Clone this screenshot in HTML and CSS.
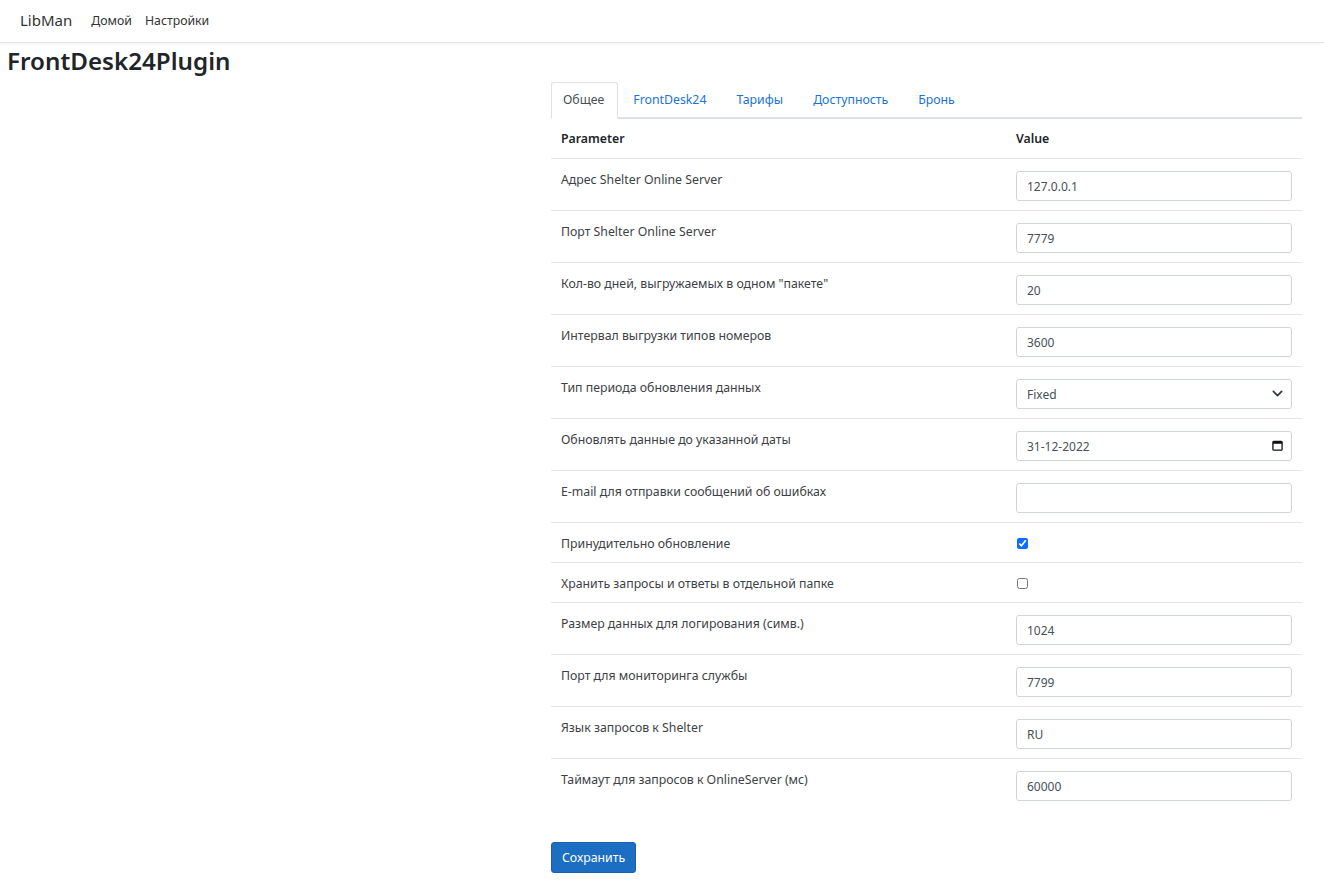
FILE: index.html
```html
<!DOCTYPE html>
<html lang="ru">
<head>
    <meta charset="UTF-8">
    <meta name="viewport" content="width=device-width, initial-scale=1.0">
    <title>FrontDesk24Plugin</title>
    <link rel="stylesheet" href="styles.css">
</head>
<body>
    <header class="navbar">
        <a class="brand" href="#">LibMan</a>
        <a class="nav-link" href="#">Домой</a>
        <a class="nav-link" href="#">Настройки</a>
    </header>

    <main class="page">
        <h3 class="page-title">FrontDesk24Plugin</h3>

        <div class="settings">
            <ul class="tabs">
                <li class="tab active">Общее</li>
                <li class="tab">FrontDesk24</li>
                <li class="tab">Тарифы</li>
                <li class="tab">Доступность</li>
                <li class="tab">Бронь</li>
            </ul>

            <table class="params">
                <thead>
                    <tr>
                        <th class="col-name">Parameter</th>
                        <th>Value</th>
                    </tr>
                </thead>
                <tbody>
                    <tr>
                        <td>Адрес Shelter Online Server</td>
                        <td><input class="form-control" type="text" value="127.0.0.1"></td>
                    </tr>
                    <tr>
                        <td>Порт Shelter Online Server</td>
                        <td><input class="form-control" type="text" value="7779"></td>
                    </tr>
                    <tr>
                        <td>Кол-во дней, выгружаемых в одном "пакете"</td>
                        <td><input class="form-control" type="text" value="20"></td>
                    </tr>
                    <tr>
                        <td>Интервал выгрузки типов номеров</td>
                        <td><input class="form-control" type="text" value="3600"></td>
                    </tr>
                    <tr>
                        <td>Тип периода обновления данных</td>
                        <td>
                            <div class="field">
                                <select class="form-control form-select">
                                    <option>Fixed</option>
                                </select>
                                <svg class="field-icon" width="11" height="11" viewBox="0 0 16 16">
                                    <path d="M2 5l6 6 6-6" fill="none" stroke="#343a40" stroke-width="2.6" stroke-linecap="round" stroke-linejoin="round"/>
                                </svg>
                            </div>
                        </td>
                    </tr>
                    <tr>
                        <td>Обновлять данные до указанной даты</td>
                        <td>
                            <div class="field">
                                <input class="form-control" type="text" value="31-12-2022">
                                <svg class="field-icon" width="11" height="11" viewBox="0 0 12 12">
                                    <rect x="1" y="1.5" width="10" height="9.5" rx="1" fill="none" stroke="#111" stroke-width="1.4"/>
                                    <rect x="1" y="1.5" width="10" height="2.6" fill="#111"/>
                                </svg>
                            </div>
                        </td>
                    </tr>
                    <tr>
                        <td>E-mail для отправки сообщений об ошибках</td>
                        <td><input class="form-control" type="text" value=""></td>
                    </tr>
                    <tr>
                        <td>Принудительно обновление</td>
                        <td><input class="check" type="checkbox" checked></td>
                    </tr>
                    <tr>
                        <td>Хранить запросы и ответы в отдельной папке</td>
                        <td><input class="check" type="checkbox"></td>
                    </tr>
                    <tr>
                        <td>Размер данных для логирования (симв.)</td>
                        <td><input class="form-control" type="text" value="1024"></td>
                    </tr>
                    <tr>
                        <td>Порт для мониторинга службы</td>
                        <td><input class="form-control" type="text" value="7799"></td>
                    </tr>
                    <tr>
                        <td>Язык запросов к Shelter</td>
                        <td><input class="form-control" type="text" value="RU"></td>
                    </tr>
                    <tr class="last">
                        <td>Таймаут для запросов к OnlineServer (мс)</td>
                        <td><input class="form-control" type="text" value="60000"></td>
                    </tr>
                </tbody>
            </table>

            <button class="btn-primary">Сохранить</button>
        </div>
    </main>
</body>
</html>
```

FILE: styles.css
```css
* {
    box-sizing: border-box;
}

body {
    margin: 0;
    font-family: "Noto Sans", "Open Sans", sans-serif;
    font-size: 12.3px;
    color: #212529;
    background-color: #fff;
}

a {
    text-decoration: none;
}

.navbar {
    display: flex;
    align-items: center;
    height: 43px;
    padding-left: 20px;
    padding-bottom: 2px;
    border-bottom: 1px solid #e5e5e5;
    box-shadow: 0 1px 3px rgba(0,0,0,0.05);
}

.brand {
    font-size: 15px;
    color: #333;
    margin-right: 19px;
}

.nav-link {
    font-size: 12.3px;
    color: #333;
    margin-right: 13px;
}

.page {
    padding: 0 7px;
}

.page-title {
    margin: 4px 0 7px;
    font-size: 24.2px;
    font-weight: 600;
    line-height: 28px;
    color: #212529;
}

.settings {
    margin-left: 544px;
    width: 751px;
}

.tabs {
    display: flex;
    list-style: none;
    margin: 0;
    padding: 0;
    border-bottom: 2px solid #dee2e6;
}

.tab {
    padding: 8px 14px 9px;
    margin-bottom: -2px;
    line-height: 18px;
    color: #1a73d8;
    border: 1px solid transparent;
    border-radius: 3px 3px 0 0;
}

.tab.active {
    color: #495057;
    border-color: #dee2e6 #dee2e6 #fff;
    background-color: #fff;
    padding-left: 11px;
    padding-right: 13px;
}

.params {
    width: 100%;
    border-collapse: collapse;
    margin-bottom: 32px;
}

.params th,
.params td {
    padding: 12px 10px 9px;
    vertical-align: top;
    text-align: left;
    line-height: 18px;
    border-bottom: 1px solid #e3e6ea;
}

.params th {
    font-weight: 600;
    padding-top: 11px;
    padding-bottom: 10px;
}

.params td:first-child {
    color: #3d4146;
}

.col-name {
    width: 455px;
}

.params tr.last td {
    border-bottom: none;
}

.form-control {
    display: block;
    width: 100%;
    height: 30px;
    padding: 4px 10px;
    font-family: inherit;
    font-size: 12px;
    color: #495057;
    background-color: #fff;
    border: 1px solid #ced4da;
    border-radius: 3px;
}

.form-select {
    appearance: none;
    -webkit-appearance: none;
}

.field {
    position: relative;
}

.field-icon {
    position: absolute;
    right: 9px;
    top: 9px;
}

.check {
    display: block;
    margin: 3px 0 4px 1px;
    width: 11px;
    height: 11px;
    accent-color: #0d6efd;
}

.btn-primary {
    font-family: inherit;
    font-size: 12.3px;
    color: #fff;
    background-color: #1b6ec2;
    border: 1px solid #1861ac;
    border-radius: 3px;
    padding: 6px 10px;
    line-height: 17px;
    cursor: pointer;
}
```
